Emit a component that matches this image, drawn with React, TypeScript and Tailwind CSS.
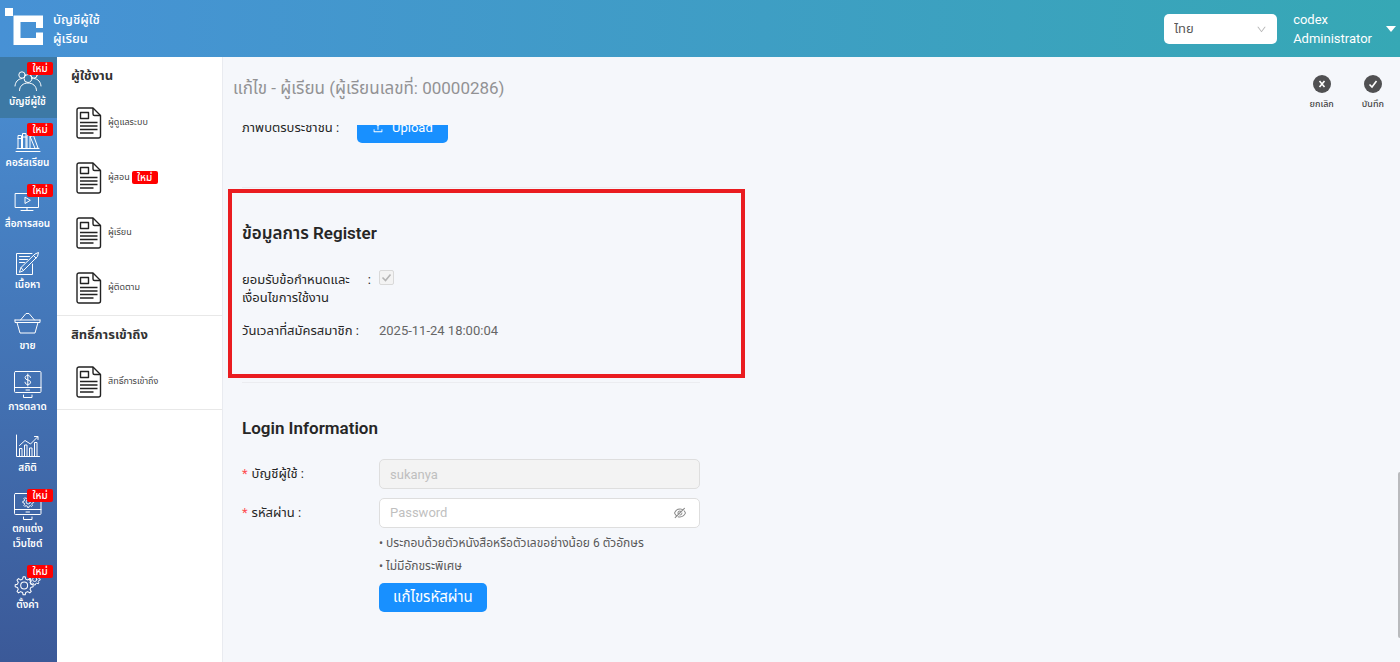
import type { ReactNode } from "react";
import { AiOutlineDown, AiOutlineEyeInvisible, AiOutlineUpload } from "react-icons/ai";

const GEAR =
  "M9.6 11.4l.5-2h1.8l.5 2 1.7.7 1.8-1.1 1.3 1.3-1.1 1.8.7 1.7 2 .5v1.8l-2 .5-.7 1.7 1.1 1.8-1.3 1.3-1.8-1.1-1.7.7-.5 2h-1.8l-.5-2-1.7-.7-1.8 1.1-1.3-1.3 1.1-1.8-.7-1.7-2-.5v-1.8l2-.5.7-1.7-1.1-1.8 1.3-1.3 1.8 1.1z";

function RailIcon({ children }: { children: ReactNode }) {
  return (
    <svg
      viewBox="0 0 28 28"
      className="size-7 shrink-0"
      fill="none"
      stroke="currentColor"
      strokeWidth="1"
      strokeLinecap="round"
      strokeLinejoin="round"
      aria-hidden
    >
      {children}
    </svg>
  );
}

const railItems = [
  {
    label: "บัญชีผู้ใช้",
    isNew: true,
    active: true,
    icon: (
      <>
        <circle cx="8" cy="9" r="3.2" />
        <circle cx="20" cy="9" r="3.2" />
        <circle cx="14" cy="12.5" r="4" />
        <path d="M5.5 24.5c0-4.5 3.8-7.5 8.5-7.5s8.5 3 8.5 7.5" />
        <path d="M1 20c.4-4 2.6-7 7-7.5M27 20c-.4-4-2.6-7-7-7.5" />
      </>
    ),
  },
  {
    label: "คอร์สเรียน",
    isNew: true,
    icon: (
      <>
        <path d="M2 24.5h24M3 21.500h22" />
        <path d="M4 21.500v-13h3.500v13M8.500 21.500v-15h3.500v15M13 21.500v-13h3v13" />
        <path d="M16.500 9.500l3-1 4.500 12.500-2.500.5zM4 11.500h3.500M8.500 10h3.500" />
      </>
    ),
  },
  {
    label: "สื่อการสอน",
    isNew: true,
    icon: (
      <>
        <path d="M1.500 5.500h23v14h-23zM13 19.500v3M7 22.500h12" />
        <path d="M11 9.500v6l5-3z" />
      </>
    ),
  },
  {
    label: "เนื้อหา",
    icon: (
      <>
        <path d="M18 4.500H2.500v21h16V15" />
        <path d="M5.500 7.500h10M5.500 10.500h8M5.500 13.500h5" />
        <path d="M5.500 23l1.500-4.500L21 5l3.500-1.500L23.500 7.500 9.500 21.500zM7 18.500l2.500 3M19.500 6.500l2.500 2.500" />
      </>
    ),
  },
  {
    label: "ขาย",
    icon: (
      <>
        <path d="M1 10h25M1 10v2.500h25V10M3 12.500l3 10.500h15l3-10.500" />
        <path d="M6.500 10L12 3.500h3L20.500 10" />
      </>
    ),
  },
  {
    label: "การตลาด",
    icon: (
      <>
        <rect x=".5" y=".5" width="26.5" height="21" rx="1" />
        <path d="M.5 16.500h26.500M12 19h3.500M9.500 24v2.500h8.500v-2.500" />
        <path d="M16.500 6.500c0-1.200-1.200-2-2.700-2s-2.700.8-2.700 2.200c0 3 5.500 1.600 5.500 4.500 0 1.400-1.200 2.300-2.800 2.300s-2.800-.9-2.800-2.300M13.800 3v12" />
      </>
    ),
  },
  {
    label: "สถิติ",
    icon: (
      <>
        <path d="M2.500 3v21.500h23" />
        <path d="M5.500 24v-7.500h2.500V24M10.500 24v-11h2.500v11M15.500 24v-8h2.500v8M20.500 24V10.500h2.500V24" />
        <path d="M5.500 13.500l5.500-5 5.500 3.500L23.500 5M20.500 4.500h3.500v3" />
      </>
    ),
  },
  {
    label: "ตกแต่ง เว็บไซต์",
    isNew: true,
    icon: (
      <>
        <rect x=".5" y=".5" width="26.5" height="21" rx="1" />
        <path d="M.5 16.500h26.500M12 19h3.500M9.500 24v2.500h8.500v-2.500" />
        <g transform="translate(6.500 -3) scale(.7)" strokeWidth="1.300">
          <path d={GEAR} />
          <circle cx="11" cy="17" r="3" />
        </g>
      </>
    ),
  },
  {
    label: "ตั้งค่า",
    isNew: true,
    icon: (
      <>
        <g transform="translate(-2.500 -3) scale(1.150)" strokeWidth=".9">
          <path d={GEAR} />
          <circle cx="11" cy="17" r="3" />
        </g>
        <g transform="translate(13 -1.500) scale(.7)" strokeWidth="1.300">
          <path d={GEAR} />
          <circle cx="11" cy="17" r="3" />
        </g>
      </>
    ),
  },
];

const menuGroups = [
  {
    title: "ผู้ใช้งาน",
    items: [
      { label: "ผู้ดูแลระบบ" },
      { label: "ผู้สอน", isNew: true },
      { label: "ผู้เรียน" },
      { label: "ผู้ติดตาม" },
    ],
  },
  { title: "สิทธิ์การเข้าถึง", items: [{ label: "สิทธิ์การเข้าถึง" }] },
];

function NewBadge({ className = "" }: { className?: string }) {
  return (
    <span
      className={`flex h-[13px] w-[26px] items-center justify-center rounded-xs bg-[#ff0000] text-[10px] font-medium leading-none text-white ${className}`}
    >
      ใหม่
    </span>
  );
}

function DocIcon() {
  return (
    <svg viewBox="0 0 26 32" className="h-8 w-[26px] shrink-0" fill="none" stroke="#222" strokeWidth="1.4" strokeLinejoin="round" aria-hidden>
      <path d="M3 1h14l7.500 7.500V29a2 2 0 0 1-2 2H3a2 2 0 0 1-2-2V3a2 2 0 0 1 2-2z" />
      <path d="M17 1v6a1.500 1.500 0 0 0 1.500 1.500h6" />
      <path d="M4.500 5.500h8v6h-8zM4 15.500h17.500M4 19h17.500M4 22.500h17.500M4 26h13.500" />
    </svg>
  );
}

function Header() {
  return (
    <header className="flex h-[57px] shrink-0 items-center bg-linear-to-r from-[#4791d5] to-[#36a8b5] text-[13px] leading-[19px] text-white">
      <svg viewBox="0 0 57 57" className="size-[57px] shrink-0" fill="#fff" aria-hidden>
        <path d="M5 8h8v8H5z" />
        <path d="M13.500 15.500H43V28h-7v-6H20.500v16H36v-5.500h7V45H13.500z" />
      </svg>
      <div className="-ml-1 flex-1 font-medium">
        <p>บัญชีผู้ใช้</p>
        <p>ผู้เรียน</p>
      </div>
      <div className="relative mr-4">
        <select
          aria-label="ภาษา"
          className="h-[30px] w-[113px] appearance-none rounded-[5px] bg-white px-2.5 text-[13px] text-[#595959]"
        >
          <option>ไทย</option>
        </select>
        <AiOutlineDown className="pointer-events-none absolute right-2.5 top-2.5 size-[11px] text-[#b8b8b8]" />
      </div>
      <button type="button" className="flex items-center gap-3.5 pr-1 text-left">
        <span>
          codex
          <br />
          Administrator
        </span>
        <span className="border-x-[5px] border-t-[6px] border-x-transparent border-t-white" />
      </button>
    </header>
  );
}

function Rail() {
  return (
    <nav className="w-[57px] shrink-0 bg-linear-to-b from-[#4a8fd3] to-[#3b5998] text-white">
      {railItems.map((item) => (
        <a
          key={item.label}
          href="#"
          className={`relative flex flex-col items-center py-[9px] pr-0.5 text-center text-[10px] font-semibold leading-[15px] ${
            item.active ? "bg-[#3d79a5]" : ""
          }`}
        >
          <RailIcon>{item.icon}</RailIcon>
          {item.label.split(" ").map((line) => (
            <span key={line} className="whitespace-nowrap">
              {line}
            </span>
          ))}
          {item.isNew && <NewBadge className="absolute right-1 top-[5px]" />}
        </a>
      ))}
    </nav>
  );
}

function SideMenu() {
  return (
    <aside className="w-[166px] shrink-0 border-r border-[#e9ebf0] bg-white">
      {menuGroups.map((group) => (
        <div key={group.title} className="border-b border-[#e8e8e8]">
          <h2 className="px-3.5 text-[13px] font-bold leading-[38px] text-[#333]">{group.title}</h2>
          {group.items.map((item) => (
            <a key={item.label} href="#" className="flex h-[55px] items-center pl-[19px] text-[9px] text-[#444]">
              <DocIcon />
              <span className="ml-1.5 mr-0.5">{item.label}</span>
              {"isNew" in item && <NewBadge />}
            </a>
          ))}
        </div>
      ))}
    </aside>
  );
}

function ToolbarButton({ label, children }: { label: string; children: ReactNode }) {
  return (
    <button type="button" className="flex flex-col items-center gap-1 text-[9px] font-medium leading-[14px] text-[#444]">
      <svg viewBox="0 0 18 18" className="size-[18px]" fill="none" stroke="#fff" strokeWidth="1.6" aria-hidden>
        <circle cx="9" cy="9" r="9" fill="#505052" stroke="none" />
        {children}
      </svg>
      {label}
    </button>
  );
}

function Required() {
  return <span className="mr-1 text-[#ff4d4f]">*</span>;
}

export default function App() {
  return (
    <div className="flex h-screen flex-col overflow-hidden bg-[#f5f7fb] font-[Roboto,'Noto_Sans_Thai','Noto_Sans',sans-serif]">
      <Header />
      <div className="flex min-h-0 flex-1">
        <Rail />
        <SideMenu />
        <main className="relative flex min-w-0 flex-1 flex-col">
          <div className="flex h-[68px] shrink-0 items-start justify-between pl-2.5 pr-4 pt-[18px]">
            <h1 className="text-[17px] leading-[26px] text-[#929294]">
              แก้ไข - ผู้เรียน (ผู้เรียนเลขที่: 00000286)
            </h1>
            <div className="flex gap-7">
              <ToolbarButton label="ยกเลิก">
                <path d="M6.500 6l5 6M11.500 6l-5 6" />
              </ToolbarButton>
              <ToolbarButton label="บันทึก">
                <path d="M5.500 9.500l2.500 2.500 4.500-6" />
              </ToolbarButton>
            </div>
          </div>

          <div className="min-h-0 flex-1 overflow-hidden pl-[19px] text-[13px] text-[#262626]">
            {/* scrolled part of the form: the ID card row is half hidden */}
            <form className="-mt-[13px] max-w-[458px]">
              <div className="flex items-center pb-11">
                <span className="w-[115px] leading-[18px]">ภาพบัตรประชาชน :</span>
                <button
                  type="button"
                  className="flex h-[31px] items-center gap-2 rounded-[5px] bg-[#1890ff] px-[15px] text-white"
                >
                  <AiOutlineUpload className="size-3" />
                  Upload
                </button>
              </div>

              <section className="relative border-t border-[#ebecf0] pb-[42px] pt-[33px]">
                <h2 className="text-[17px] font-semibold leading-6">ข้อมูลการ Register</h2>
                <div className="mt-[25px] flex items-start leading-[18px]">
                  <label htmlFor="accept" className="mt-px flex w-[137px] justify-between pr-2">
                    <span>
                      ยอมรับข้อกำหนดและ
                      <br />
                      เงื่อนไขการใช้งาน
                    </span>
                    <span>:</span>
                  </label>
                  <span className="relative flex">
                    <input
                      id="accept"
                      type="checkbox"
                      defaultChecked
                      disabled
                      className="size-[15px] appearance-none rounded-xs border border-[#d9d9d9] bg-[#f3f3f3]"
                    />
                    <svg viewBox="0 0 15 15" className="pointer-events-none absolute inset-0" fill="none" stroke="#b5b5b5" strokeWidth="1.6" aria-hidden>
                      <path d="M3.500 7.500l3 3 5-6" />
                    </svg>
                  </span>
                </div>
                <div className="mt-[15px] flex leading-[18px]">
                  <span className="w-[137px]">วันเวลาที่สมัครสมาชิก :</span>
                  <span className="text-[#666]">2025-11-24 18:00:04</span>
                </div>
                <div className="pointer-events-none absolute -left-3.5 -right-[45px] bottom-1 top-px border-4 border-[#ea1c20]" />
              </section>

              <section className="border-t border-[#ebecf0] pt-[33px]">
                <h2 className="text-[17px] font-semibold leading-6">Login Information</h2>
                <div className="mt-[19px] flex items-center">
                  <label htmlFor="username" className="w-[137px] shrink-0">
                    <Required />
                    บัญชีผู้ใช้ :
                  </label>
                  <input
                    id="username"
                    defaultValue="sukanya"
                    disabled
                    className="h-[30px] min-w-0 flex-1 rounded-[5px] border border-[#dedede] bg-[#f3f3f3] px-2.5 text-[#bfbfbf]"
                  />
                </div>
                <div className="mt-[9px] flex items-center">
                  <label htmlFor="password" className="w-[137px] shrink-0">
                    <Required />
                    รหัสผ่าน :
                  </label>
                  <div className="flex h-[30px] min-w-0 flex-1 items-center rounded-[5px] border border-[#dedede] bg-white px-2.5">
                    <input
                      id="password"
                      type="password"
                      placeholder="Password"
                      className="min-w-0 flex-1 outline-none placeholder:text-[#bfbfbf]"
                    />
                    <button type="button" aria-label="แสดงรหัสผ่าน" className="mr-0.5 text-[#888]">
                      <AiOutlineEyeInvisible className="size-[14px]" />
                    </button>
                  </div>
                </div>
                <div className="ml-[137px]">
                  <ul className="pt-1 text-[12px] leading-[23px] text-[#595959]">
                    <li>• ประกอบด้วยตัวหนังสือหรือตัวเลขอย่างน้อย 6 ตัวอักษร</li>
                    <li>• ไม่มีอักขระพิเศษ</li>
                  </ul>
                  <button type="button" className="mt-[5px] h-[29px] rounded-[5px] bg-[#1890ff] px-3.5 text-[15px] text-white">
                    แก้ไขรหัสผ่าน
                  </button>
                </div>
              </section>
            </form>
          </div>

          <div className="absolute bottom-6 right-0 h-[166px] w-0.5 rounded-l-sm bg-[#b9babd]" />
        </main>
      </div>
    </div>
  );
}
